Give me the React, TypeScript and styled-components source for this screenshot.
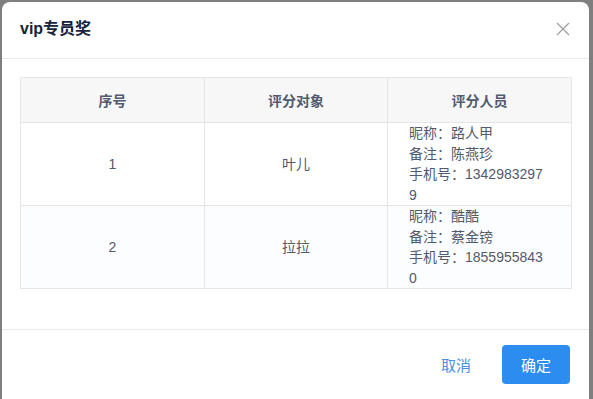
import * as React from 'react'
import styled, { createGlobalStyle } from 'styled-components'

const GlobalStyle = createGlobalStyle`
    html, body {
        margin: 0;
        padding: 0;
        background: #7f7f7f;
        overflow: hidden;
    }
    body {
        font-family: "Liberation Sans", "Noto Sans CJK SC", sans-serif;
    }
`

const Overlay = styled.div`
    width: 593px;
    height: 399px;
    box-sizing: border-box;
    padding: 2px 4px 0 2px;
`

const Modal = styled.div`
    background: #fff;
    border-radius: 8px;
    height: 405px;
    display: flex;
    flex-direction: column;
    overflow: hidden;
`

const ModalHeader = styled.div`
    height: 57px;
    box-sizing: border-box;
    border-bottom: 1px solid #e8eaec;
    display: flex;
    align-items: center;
    justify-content: space-between;
    padding: 0 19px 0 18px;
`

const Title = styled.div`
    font-size: 16px;
    font-weight: bold;
    color: #17233d;
    line-height: 20px;
    margin-top: -2px;
`

const CloseButton = styled.button`
    border: 0;
    background: none;
    padding: 0;
    width: 14px;
    height: 14px;
    display: flex;
    margin-top: -3px;
    cursor: pointer;
`

const ModalBody = styled.div`
    padding: 18px 18px 40px 18px;
`

const Table = styled.table`
    width: 551px;
    border-collapse: collapse;
    table-layout: fixed;
    border: 1px solid #e3e5e8;
    font-size: 14px;
    color: #515a6e;
`

const HeadCell = styled.th`
    height: 44px;
    padding: 0;
    background: #f7f7f7;
    border: 1px solid #e3e5e8;
    font-weight: bold;
    text-align: center;
    color: #515a6e;
`

const Row = styled.tr<{ $tint?: boolean }>`
    background: ${p => (p.$tint ? '#fcfdfe' : '#fff')};
`

const Cell = styled.td<{ $left?: boolean }>`
    height: 82px;
    padding: ${p => (p.$left ? '0 25px 0 21px' : '0')};
    border: 1px solid #e3e5e8;
    text-align: ${p => (p.$left ? 'left' : 'center')};
    line-height: 20.5px;
    word-break: break-all;
    vertical-align: middle;
`

const ModalFooter = styled.div`
    border-top: 1px solid #e8eaec;
    padding: 15px 19px 0 0;
    display: flex;
    justify-content: flex-end;
    gap: 12px;
`

const Button = styled.button<{ $primary?: boolean }>`
    width: 68px;
    height: 39px;
    border-radius: 4px;
    border: 0;
    font-family: "Liberation Sans", "Noto Sans CJK SC", sans-serif;
    font-size: 15px;
    cursor: pointer;
    background: ${p => (p.$primary ? '#2d8cf0' : 'transparent')};
    color: ${p => (p.$primary ? '#fff' : '#4a90e2')};
`

interface Rater {
    nick: string
    note: string
    phone: string
}

interface RowData {
    id: number
    target: string
    rater: Rater
}

const rows: RowData[] = [
    { id: 1, target: '叶儿', rater: { nick: '路人甲', note: '陈燕珍', phone: '13429832979' } },
    { id: 2, target: '拉拉', rater: { nick: '酷酷', note: '蔡金镑', phone: '18559558430' } },
]

const CloseIcon = () => (
    <svg width="14" height="14" viewBox="0 0 14 14">
        <path d="M1 1 L13 13 M13 1 L1 13" stroke="#a0a0a0" strokeWidth="1.3" fill="none" />
    </svg>
)

export default function App() {
    return (
        <Overlay>
            <GlobalStyle />
            <Modal>
                <ModalHeader>
                    <Title>vip专员奖</Title>
                    <CloseButton aria-label="close">
                        <CloseIcon />
                    </CloseButton>
                </ModalHeader>
                <ModalBody>
                    <Table>
                        <colgroup>
                            <col style={{ width: 184 }} />
                            <col style={{ width: 183 }} />
                            <col style={{ width: 184 }} />
                        </colgroup>
                        <thead>
                            <tr>
                                <HeadCell>序号</HeadCell>
                                <HeadCell>评分对象</HeadCell>
                                <HeadCell>评分人员</HeadCell>
                            </tr>
                        </thead>
                        <tbody>
                            {rows.map((r, i) => (
                                <Row key={r.id} $tint={i % 2 === 1}>
                                    <Cell>{r.id}</Cell>
                                    <Cell>{r.target}</Cell>
                                    <Cell $left>
                                        <div>昵称：{r.rater.nick}</div>
                                        <div>备注：{r.rater.note}</div>
                                        <div>手机号：{r.rater.phone}</div>
                                    </Cell>
                                </Row>
                            ))}
                        </tbody>
                    </Table>
                </ModalBody>
                <ModalFooter>
                    <Button>取消</Button>
                    <Button $primary>确定</Button>
                </ModalFooter>
            </Modal>
        </Overlay>
    )
}
